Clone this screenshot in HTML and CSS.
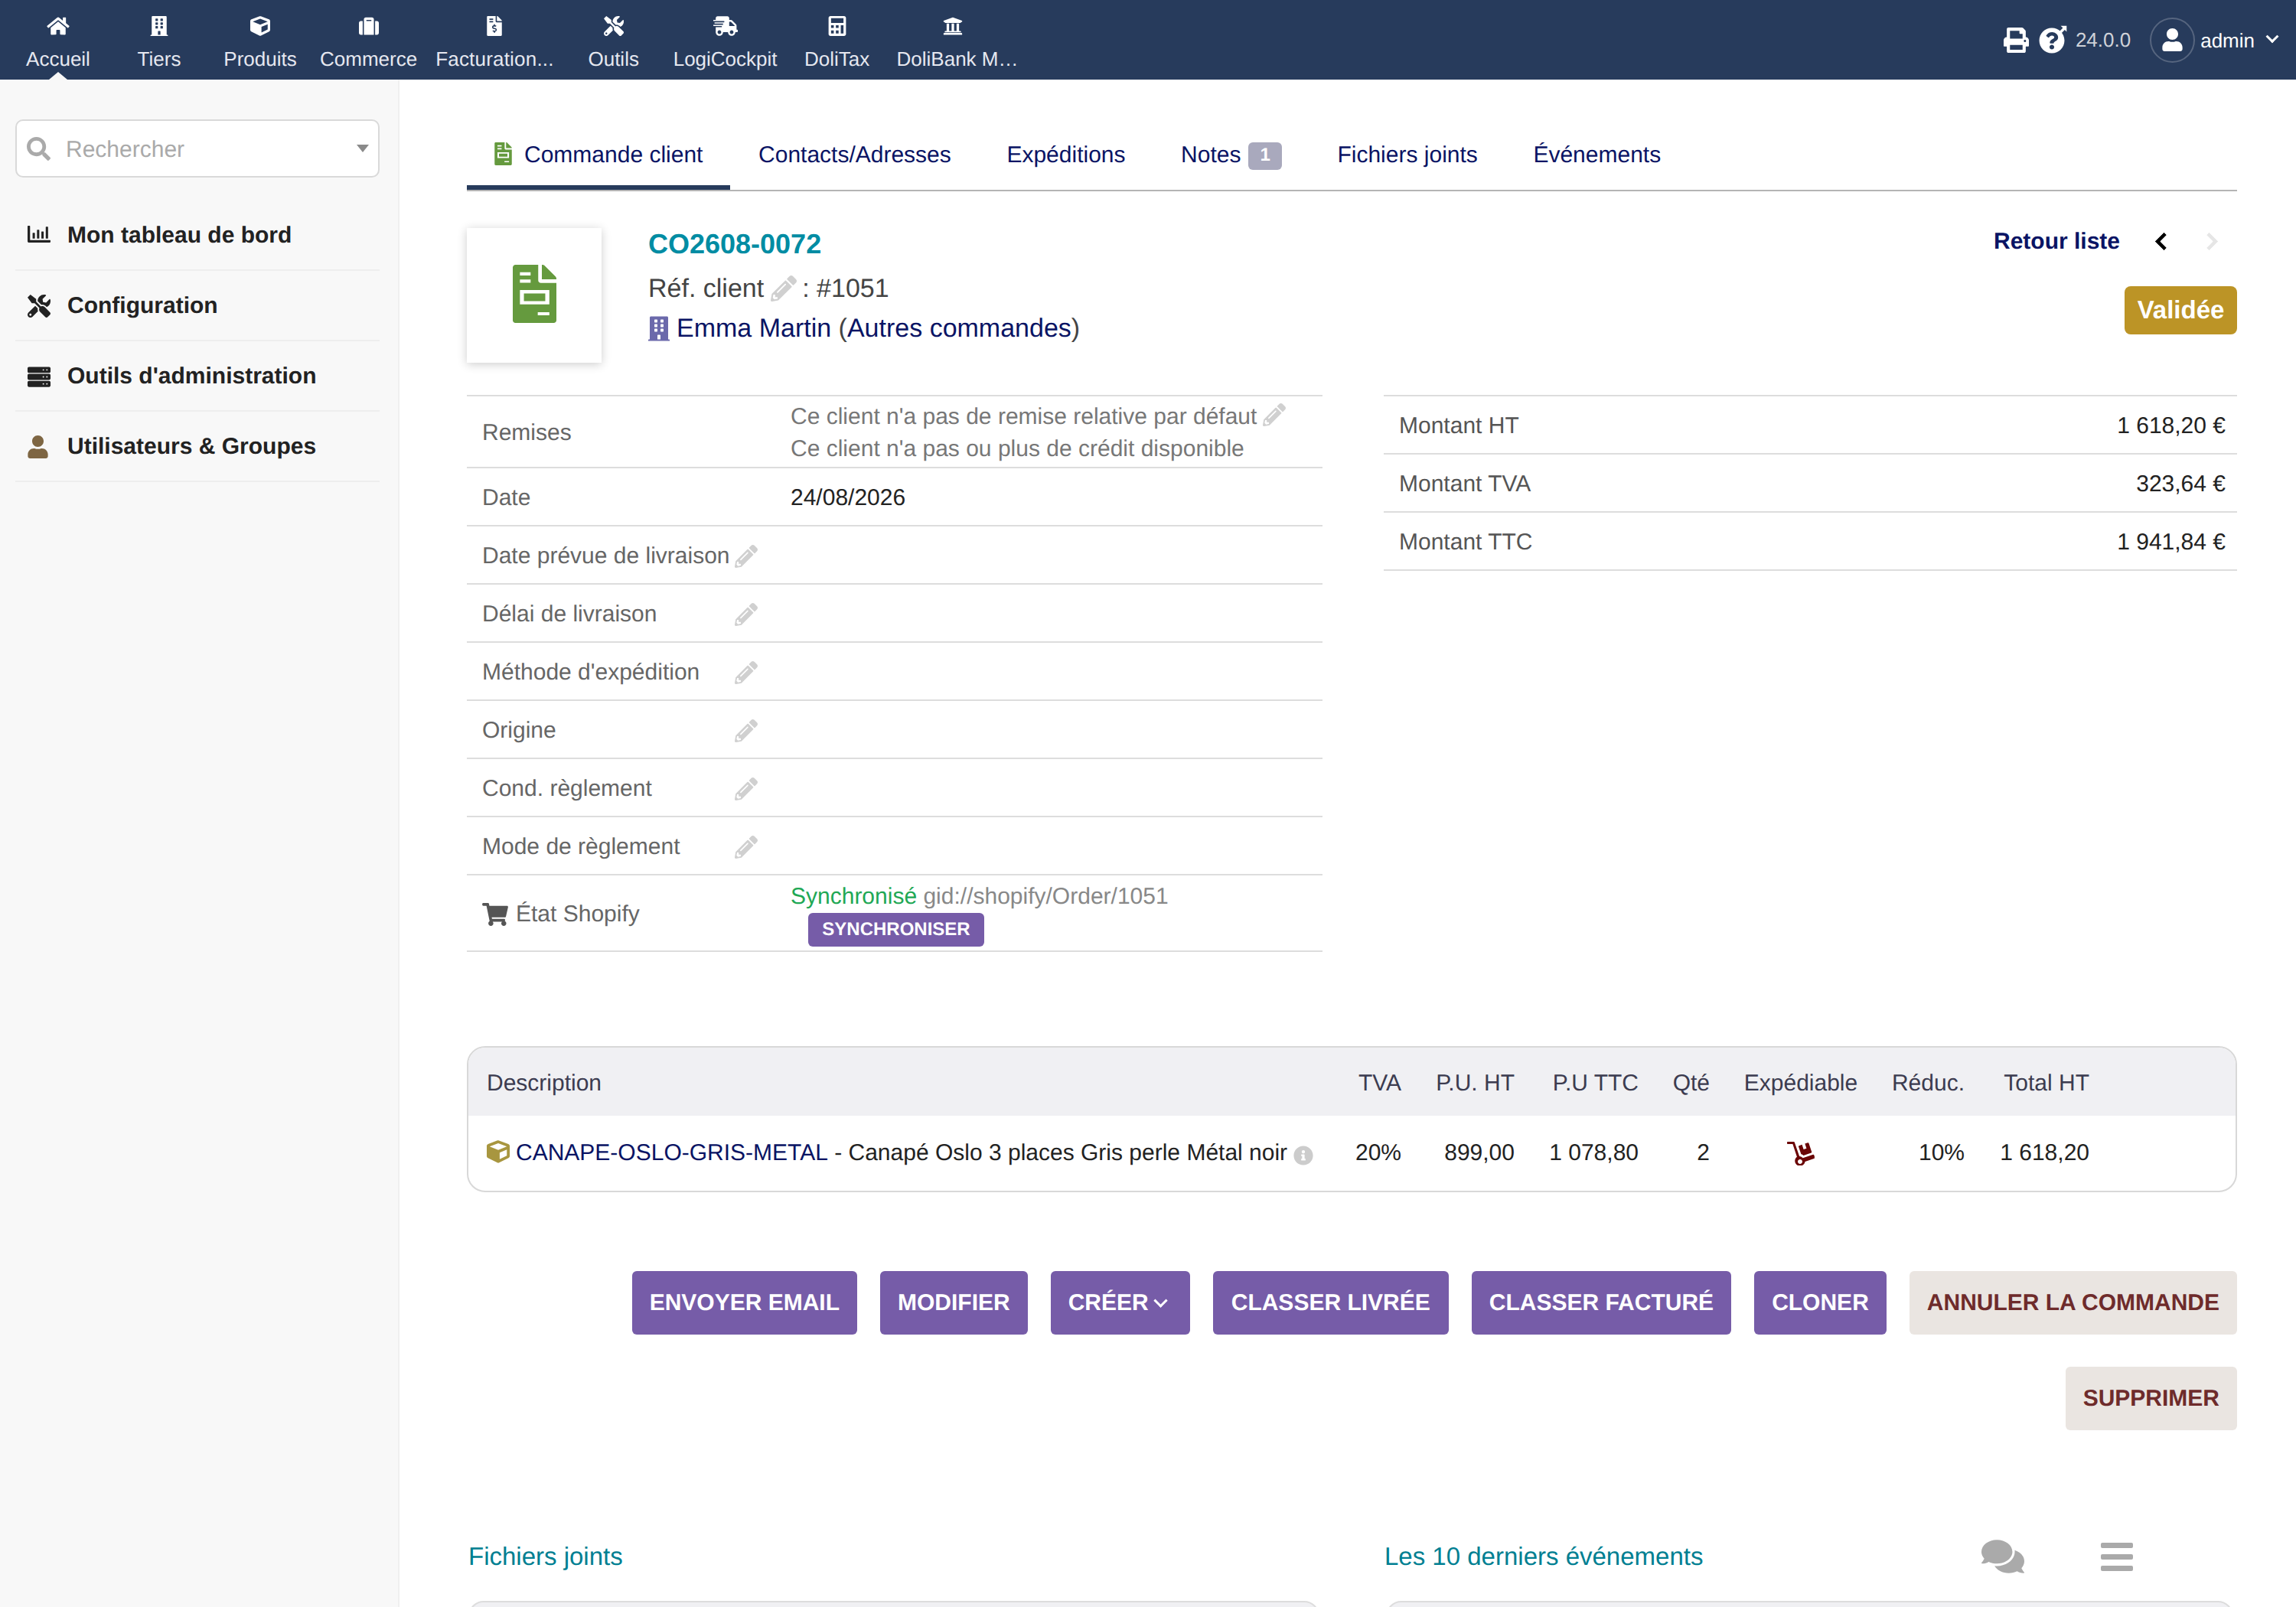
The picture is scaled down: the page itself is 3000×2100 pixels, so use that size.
FILE: index.html
```html
<!DOCTYPE html>
<html lang="fr">
<head>
<meta charset="utf-8">
<title>CO2608-0072</title>
<link rel="stylesheet" href="styles.css">
</head>
<body>
<svg class="defs" width="0" height="0" aria-hidden="true">
<symbol id="i-home" viewBox="0 0 576 512"><path d="M280.37 148.26L96 300.11V464a16 16 0 0 0 16 16l112.06-.29a16 16 0 0 0 15.92-16V368a16 16 0 0 1 16-16h64a16 16 0 0 1 16 16v95.64a16 16 0 0 0 16 16.05L464 480a16 16 0 0 0 16-16V300L295.67 148.26a12.19 12.19 0 0 0-15.3 0zM571.6 251.47L488 182.56V44.05a12 12 0 0 0-12-12h-56a12 12 0 0 0-12 12v72.61L318.47 43a48 48 0 0 0-61 0L4.34 251.47a12 12 0 0 0-1.6 16.9l25.5 31A12 12 0 0 0 45.15 301l235.22-193.74a12.19 12.19 0 0 1 15.3 0L530.9 301a12 12 0 0 0 16.9-1.6l25.5-31a12 12 0 0 0-1.7-16.93z"/></symbol>
<symbol id="i-building" viewBox="0 0 448 512"><path d="M436 480h-20V24c0-13.255-10.745-24-24-24H56C42.745 0 32 10.745 32 24v456H12c-6.627 0-12 5.373-12 12v20h448v-20c0-6.627-5.373-12-12-12zM128 76c0-6.627 5.373-12 12-12h40c6.627 0 12 5.373 12 12v40c0 6.627-5.373 12-12 12h-40c-6.627 0-12-5.373-12-12V76zm0 96c0-6.627 5.373-12 12-12h40c6.627 0 12 5.373 12 12v40c0 6.627-5.373 12-12 12h-40c-6.627 0-12-5.373-12-12v-40zm52 148h-40c-6.627 0-12-5.373-12-12v-40c0-6.627 5.373-12 12-12h40c6.627 0 12 5.373 12 12v40c0 6.627-5.373 12-12 12zm76 160h-64v-84c0-6.627 5.373-12 12-12h40c6.627 0 12 5.373 12 12v84zm64-172c0 6.627-5.373 12-12 12h-40c-6.627 0-12-5.373-12-12v-40c0-6.627 5.373-12 12-12h40c6.627 0 12 5.373 12 12v40zm0-96c0 6.627-5.373 12-12 12h-40c-6.627 0-12-5.373-12-12v-40c0-6.627 5.373-12 12-12h40c6.627 0 12 5.373 12 12v40zm0-96c0 6.627-5.373 12-12 12h-40c-6.627 0-12-5.373-12-12V76c0-6.627 5.373-12 12-12h40c6.627 0 12 5.373 12 12v40z"/></symbol>
<symbol id="i-cube" viewBox="0 0 512 512"><path d="M239.1 6.3l-208 78c-18.7 7-31.1 25-31.1 45v225.1c0 18.2 10.3 34.8 26.5 42.9l208 104c13.5 6.8 29.4 6.8 42.9 0l208-104c16.3-8.1 26.5-24.8 26.5-42.9V129.3c0-20-12.4-37.9-31.1-44.9l-208-78C262 2.2 250 2.2 239.1 6.3zM256 68.4l192 72v1.1l-192 78-192-78v-1.1l192-72zm32 356V275.5l160-65v133.9l-160 80z"/></symbol>
<symbol id="i-suitcase" viewBox="0 0 512 512"><path d="M128 480h256V80c0-26.5-21.5-48-48-48H176c-26.5 0-48 21.5-48 48v400zm64-384h128v32H192V96zm320 80v256c0 26.5-21.5 48-48 48h-48V128h48c26.5 0 48 21.5 48 48zM96 480H48c-26.5 0-48-21.5-48-48V176c0-26.5 21.5-48 48-48h48v352z"/></symbol>
<symbol id="i-invoice" viewBox="0 0 384 512"><path fill-rule="evenodd" d="M377 105L279.1 7c-4.5-4.5-10.6-7-17-7H256v128h128v-6.1c0-6.3-2.5-12.4-7-16.9zM224 136V0H24C10.7 0 0 10.7 0 24v464c0 13.3 10.7 24 24 24h336c13.3 0 24-10.7 24-24V160H248c-13.2 0-24-10.8-24-24zM64 64h96v32H64zM64 128h96v32H64zM208 238v-24h-32v24c-26 3-44 22-44 46 0 23 16 40 38 46l42 12c7 2 12 8 12 15 0 8-7 15-16 15h-28c-7 0-13-2-18-6l-22 22c10 9 24 14 38 15v25h32v-25c26-3 44-23 44-47 0-23-16-40-38-46l-42-12c-7-2-12-8-12-15 0-8 7-14 16-14h28c7 0 13 2 18 6l22-22c-10-9-24-14-38-15z"/></symbol>
<symbol id="i-order" viewBox="0 0 384 512"><path fill-rule="evenodd" d="M377 105L279.1 7c-4.5-4.5-10.6-7-17-7H256v128h128v-6.1c0-6.3-2.5-12.4-7-16.9zM224 136V0H24C10.7 0 0 10.7 0 24v464c0 13.3 10.7 24 24 24h336c13.3 0 24-10.7 24-24V160H248c-13.2 0-24-10.8-24-24zM63 65h94v30H63zM63 129h94v30H63zM63 223h259v126H63zM98 252h188v68H98zM220 417h102v28H220z"/></symbol>
<symbol id="i-tools" viewBox="0 0 512 512"><path d="M501.1 395.7L384 278.6c-23.1-23.1-57.6-27.6-85.4-13.9L192 158.1V96L64 0 0 64l96 128h62.1l106.6 106.6c-13.6 27.8-9.2 62.3 13.9 85.4l117.1 117.1c14.6 14.6 38.2 14.6 52.7 0l52.7-52.7c14.5-14.6 14.5-38.2 0-52.7zM331.7 225c28.3 0 54.9 11 74.9 31l19.4 19.4c15.8-6.9 30.8-16.5 43.8-29.5 37.1-37.1 49.7-89.3 37.9-136.7-2.2-9-13.5-12.1-20.1-5.5l-74.4 74.4-67.9-11.3L334 98.9l74.4-74.4c6.6-6.6 3.4-17.9-5.7-20.2-47.4-11.7-99.6.9-136.6 37.9-28.5 28.5-41.9 66.1-41.2 103.6l82.1 82.1c8.1-1.9 16.5-2.9 24.7-2.9zm-103.9 82l-56.7-56.7L18.7 402.8c-25 25-25 65.5 0 90.5s65.5 25 90.5 0l123.6-123.6c-7.6-19.9-9.9-41.6-5-62.7zM64 472c-13.2 0-24-10.8-24-24 0-13.3 10.7-24 24-24s24 10.7 24 24c0 13.2-10.7 24-24 24z"/></symbol>
<symbol id="i-truck" viewBox="0 0 640 512"><path d="M624 352h-16V243.9c0-12.7-5.1-24.9-14.1-33.9L494 110.1c-9-9-21.2-14.1-33.9-14.1H416V48c0-26.5-21.5-48-48-48H112C85.5 0 64 21.5 64 48v48H8c-4.4 0-8 3.6-8 8v16c0 4.4 3.6 8 8 8h272c4.4 0 8 3.6 8 8v16c0 4.4-3.6 8-8 8H40c-4.4 0-8 3.6-8 8v16c0 4.4 3.6 8 8 8h208c4.4 0 8 3.6 8 8v16c0 4.4-3.6 8-8 8H8c-4.4 0-8 3.6-8 8v16c0 4.4 3.6 8 8 8h208c4.4 0 8 3.6 8 8v16c0 4.4-3.6 8-8 8H64v128c0 53 43 96 96 96s96-43 96-96h128c0 53 43 96 96 96s96-43 96-96h48c8.8 0 16-7.2 16-16v-32c0-8.8-7.2-16-16-16zM160 464c-26.5 0-48-21.5-48-48s21.5-48 48-48 48 21.5 48 48-21.5 48-48 48zm320 0c-26.5 0-48-21.5-48-48s21.5-48 48-48 48 21.5 48 48-21.5 48-48 48zm80-208H416V144h44.1l99.9 99.9V256z"/></symbol>
<symbol id="i-calc" viewBox="0 0 448 512"><path fill-rule="evenodd" d="M48 0h352c26.5 0 48 21.5 48 48v416c0 26.500-21.500 48-48 48H48c-26.500 0-48-21.500-48-48V48C0 21.500 21.500 0 48 0zM64 56v120h320V56zM64 236v70h70v-70zM188 236v70h70v-70zM314 236v210h70V236zM64 368v78h70v-78zM188 368v78h70v-78z"/></symbol>
<symbol id="i-bank" viewBox="0 0 512 512"><path d="M496 128v16a8 8 0 0 1-8 8h-24v12c0 6.627-5.373 12-12 12H60c-6.627 0-12-5.373-12-12v-12H24a8 8 0 0 1-8-8v-16a8 8 0 0 1 4.941-7.392l232-88a7.996 7.996 0 0 1 6.118 0l232 88A8 8 0 0 1 496 128zm-24 304H40c-13.255 0-24 10.745-24 24v16a8 8 0 0 0 8 8h464a8 8 0 0 0 8-8v-16c0-13.255-10.745-24-24-24zM96 192v192H60c-6.627 0-12 5.373-12 12v20h416v-20c0-6.627-5.373-12-12-12h-36V192h-64v192h-64V192h-64v192h-64V192H96z"/></symbol>
<symbol id="i-print" viewBox="0 0 512 512"><path d="M448 192V77.25c0-8.49-3.37-16.62-9.37-22.63L393.37 9.37c-6-6-14.14-9.37-22.63-9.37H96C78.33 0 64 14.33 64 32v160c-35.35 0-64 28.65-64 64v112c0 8.84 7.16 16 16 16h48v96c0 17.67 14.33 32 32 32h320c17.67 0 32-14.33 32-32v-96h48c8.84 0 16-7.16 16-16V256c0-35.35-28.65-64-64-64zm-64 256H128v-96h256v96zm0-224H128V64h192v48c0 8.84 7.16 16 16 16h48v96zm48 72c-13.25 0-24-10.75-24-24 0-13.26 10.75-24 24-24s24 10.74 24 24c0 13.25-10.75 24-24 24z"/></symbol>
<symbol id="i-help" viewBox="0 0 512 512"><path d="M504 256c0 136.997-111.043 248-248 248S8 392.997 8 256C8 119.083 119.043 8 256 8s248 111.083 248 248zM262.655 90c-54.497 0-89.255 22.957-116.549 63.758-3.536 5.286-2.353 12.415 2.715 16.258l34.699 26.31c5.205 3.947 12.621 3.008 16.665-2.122 17.864-22.658 30.113-35.797 57.303-35.797 20.429 0 45.698 13.148 45.698 32.958 0 14.976-12.363 22.667-32.534 33.976C247.128 238.528 216 254.941 216 296v4c0 6.627 5.373 12 12 12h56c6.627 0 12-5.373 12-12v-1.333c0-28.462 83.186-29.647 83.186-106.667 0-58.002-60.165-102-116.531-102zM256 338c-25.365 0-46 20.635-46 46 0 25.364 20.635 46 46 46s46-20.636 46-46c0-25.365-20.635-46-46-46z"/></symbol>
<symbol id="i-user" viewBox="0 0 448 512"><path d="M224 256c70.700 0 128-57.300 128-128S294.700 0 224 0 96 57.300 96 128s57.300 128 128 128zm89.600 32h-16.700c-22.200 10.200-46.900 16-72.900 16s-50.600-5.800-72.900-16h-16.700C60.200 288 0 348.200 0 422.400V464c0 26.500 21.500 48 48 48h352c26.500 0 48-21.500 48-48v-41.600c0-74.200-60.200-134.400-134.400-134.400z"/></symbol>
<symbol id="i-search" viewBox="0 0 512 512"><path d="M505 442.700L405.300 343c-4.500-4.500-10.600-7-17-7H372c27.600-35.300 44-79.700 44-128C416 93.100 322.900 0 208 0S0 93.100 0 208s93.100 208 208 208c48.300 0 92.700-16.400 128-44v16.300c0 6.400 2.500 12.500 7 17l99.700 99.700c9.400 9.400 24.600 9.400 33.900 0l28.300-28.300c9.400-9.400 9.400-24.600.1-34zM208 336c-70.700 0-128-57.200-128-128 0-70.700 57.200-128 128-128 70.700 0 128 57.200 128 128 0 70.700-57.200 128-128 128z"/></symbol>
<symbol id="i-chart" viewBox="0 0 512 376"><path d="M0 16C0 7 7 0 16 0h24c9 0 16 7 16 16v304h440c9 0 16 7 16 16v24c0 9-7 16-16 16H32c-18 0-32-14-32-32zM120 160h36c4 0 8 4 8 8v112c0 4-4 8-8 8h-36c-4 0-8-4-8-8V168c0-4 4-8 8-8zM218 90h36c4 0 8 4 8 8v182c0 4-4 8-8 8h-36c-4 0-8-4-8-8V98c0-4 4-8 8-8zM316 130h36c4 0 8 4 8 8v142c0 4-4 8-8 8h-36c-4 0-8-4-8-8V138c0-4 4-8 8-8zM414 20h36c4 0 8 4 8 8v252c0 4-4 8-8 8h-36c-4 0-8-4-8-8V28c0-4 4-8 8-8z"/></symbol>
<symbol id="i-server" viewBox="0 0 512 448"><path fill-rule="evenodd" d="M32 0h448c18 0 32 14 32 32v72c0 18-14 32-32 32H32c-18 0-32-14-32-32V32C0 14 14 0 32 0zM352 52a16 16 0 1 0 0 32 16 16 0 0 0 0-32zM432 52a16 16 0 1 0 0 32 16 16 0 0 0 0-32zM32 156h448c18 0 32 14 32 32v72c0 18-14 32-32 32H32c-18 0-32-14-32-32v-72c0-18 14-32 32-32zM352 208a16 16 0 1 0 0 32 16 16 0 0 0 0-32zM432 208a16 16 0 1 0 0 32 16 16 0 0 0 0-32zM32 312h448c18 0 32 14 32 32v72c0 18-14 32-32 32H32c-18 0-32-14-32-32v-72c0-18 14-32 32-32zM352 364a16 16 0 1 0 0 32 16 16 0 0 0 0-32zM432 364a16 16 0 1 0 0 32 16 16 0 0 0 0-32z"/></symbol>
<symbol id="i-pencil" viewBox="0 0 512 512"><path d="M497.900 142.100l-46.100 46.100c-4.700 4.700-12.300 4.700-17 0l-111-111c-4.700-4.700-4.700-12.300 0-17l46.100-46.100c18.700-18.700 49.100-18.700 67.900 0l60.100 60.100c18.800 18.700 18.800 49.100 0 67.900zM284.200 99.800L21.600 362.400.4 483.900c-2.900 16.400 11.400 30.600 27.800 27.800l121.500-21.300 262.600-262.600c4.700-4.700 4.700-12.300 0-17l-111-111c-4.800-4.700-12.400-4.700-17.100 0zM124.100 339.900c-5.500-5.500-5.500-14.300 0-19.800l154-154c5.500-5.500 14.300-5.500 19.800 0s5.500 14.300 0 19.800l-154 154c-5.500 5.500-14.300 5.500-19.800 0zM88 424h48v36.300l-64.500 11.300-31.100-31.100L51.700 376H88v48z"/></symbol>
<symbol id="i-cart" viewBox="0 0 576 512"><path d="M528.120 301.319l47.273-208C578.806 78.301 567.391 64 551.990 64H159.208l-9.166-44.810C147.758 8.021 137.930 0 126.529 0H24C10.745 0 0 10.745 0 24v16c0 13.255 10.745 24 24 24h69.883l70.248 343.435C147.325 417.100 136 435.222 136 456c0 30.928 25.072 56 56 56s56-25.072 56-56c0-15.674-6.447-29.835-16.824-40h209.647C430.447 426.165 424 440.326 424 456c0 30.928 25.072 56 56 56s56-25.072 56-56c0-22.172-12.888-41.332-31.579-50.405l5.517-24.276c3.413-15.018-8.002-29.319-23.403-29.319H218.117l-6.545-32h293.145c11.206 0 20.920-7.754 23.403-18.681z"/></symbol>
<symbol id="i-dolly" viewBox="0 0 576 512"><path d="M294.200 277.700c18 5 34.700 13.400 49.500 24.700l161.500-53.800c8.400-2.800 12.900-11.900 10.100-20.200L454.900 47.200c-2.800-8.400-11.900-12.900-20.200-10.100l-61.100 20.400 33.100 99.400L346 177l-33.100-99.400-61.600 20.500c-8.400 2.800-12.900 11.900-10.100 20.200l53 159.400zm281 48.700L565 296c-2.800-8.400-11.900-12.900-20.200-10.100l-213.500 71.200c-17.200-22-43.600-36.400-73.500-37L158.400 32.800C155 22.900 145.400 16 134.900 16H16C7.200 16 0 23.200 0 32v16c0 8.800 7.200 16 16 16h102.200l88.700 266.100c-26.200 19.500-42.900 51-42.900 85.900 0 59 48 107 107 107 53.500 0 97.800-39.400 105.700-90.700l187.100-62.400c8.300-2.800 12.900-11.900 10.100-20.200zM272 480c-26.500 0-48-21.500-48-48s21.500-48 48-48 48 21.500 48 48-21.500 48-48 48z"/></symbol>
<symbol id="i-comments" viewBox="0 0 576 512"><path d="M416 192c0-88.400-93.100-160-208-160S0 103.600 0 192c0 34.300 14.100 65.900 38 92-13.400 30.200-35.500 54.200-35.800 54.500-2.200 2.300-2.800 5.700-1.500 8.700S4.800 352 8 352c36.600 0 66.900-12.300 88.700-25 32.200 15.700 70.300 25 111.300 25 114.900 0 208-71.600 208-160zm122 220c23.900-26 38-57.700 38-92 0-66.900-53.500-124.200-129.300-148.100.9 6.600 1.300 13.300 1.300 20.100 0 105.900-107.700 192-240 192-10.800 0-21.300-.8-31.700-1.900C207.800 439.600 281.800 480 368 480c41 0 79.100-9.200 111.300-25 21.800 12.700 52.100 25 88.700 25 3.200 0 6.100-1.900 7.300-4.800 1.300-2.900.7-6.300-1.500-8.700-.3-.3-22.400-24.200-35.800-54.500z"/></symbol>
<symbol id="i-bars" viewBox="0 0 42 37"><rect width="42" height="7" rx="2"/><rect y="15" width="42" height="7" rx="2"/><rect y="30" width="42" height="7" rx="2"/></symbol>
<symbol id="i-info" viewBox="0 0 512 512"><path d="M256 8C119.043 8 8 119.083 8 256c0 136.997 111.043 248 248 248s248-111.003 248-248C504 119.083 392.957 8 256 8zm0 110c23.196 0 42 18.804 42 42s-18.804 42-42 42-42-18.804-42-42 18.804-42 42-42zm56 254c0 6.627-5.373 12-12 12h-88c-6.627 0-12-5.373-12-12v-24c0-6.627 5.373-12 12-12h12v-64h-12c-6.627 0-12-5.373-12-12v-24c0-6.627 5.373-12 12-12h64c6.627 0 12 5.373 12 12v100h12c6.627 0 12 5.373 12 12v24z"/></symbol>
<symbol id="i-arrow" viewBox="0 0 20 20"><path d="M8 1h11v11l-3.500-3.500-6 6-3.500-3.500 6-6z"/></symbol>
</svg>

<header class="topbar">
  <nav class="topnav">
    <a class="navitem active"><svg class="navicon"><use href="#i-home"/></svg><span>Accueil</span></a>
    <a class="navitem"><svg class="navicon"><use href="#i-building"/></svg><span>Tiers</span></a>
    <a class="navitem"><svg class="navicon"><use href="#i-cube"/></svg><span>Produits</span></a>
    <a class="navitem"><svg class="navicon"><use href="#i-suitcase"/></svg><span>Commerce</span></a>
    <a class="navitem nv-long"><svg class="navicon"><use href="#i-invoice"/></svg><span>Facturation...</span></a>
    <a class="navitem"><svg class="navicon"><use href="#i-tools"/></svg><span>Outils</span></a>
    <a class="navitem"><svg class="navicon"><use href="#i-truck"/></svg><span>LogiCockpit</span></a>
    <a class="navitem"><svg class="navicon"><use href="#i-calc"/></svg><span>DoliTax</span></a>
    <a class="navitem"><svg class="navicon nv-bank"><use href="#i-bank"/></svg><span>DoliBank M…</span></a>
  </nav>
  <div class="topright">
    <svg class="ti-print"><use href="#i-print"/></svg>
    <span class="help"><svg class="ti-help"><use href="#i-help"/></svg><svg class="ti-arrow"><use href="#i-arrow"/></svg></span>
    <span class="version">24.0.0</span>
    <span class="avatar"><svg class="ti-user"><use href="#i-user"/></svg></span>
    <span class="uname">admin</span>
    <span class="chev-down"></span>
  </div>
</header>

<div class="layout">
  <aside class="sidebar">
    <div class="search">
      <svg class="search-icon"><use href="#i-search"/></svg>
      <span class="search-text">Rechercher</span>
      <span class="caret"></span>
    </div>
    <ul class="menu">
      <li class="menu-item"><svg class="mi mi-chart"><use href="#i-chart"/></svg>Mon tableau de bord</li>
      <li class="menu-item"><svg class="mi mi-tools"><use href="#i-tools"/></svg>Configuration</li>
      <li class="menu-item"><svg class="mi mi-server"><use href="#i-server"/></svg>Outils d'administration</li>
      <li class="menu-item"><svg class="mi mi-user"><use href="#i-user"/></svg>Utilisateurs &amp; Groupes</li>
    </ul>
  </aside>

  <main class="main">
    <div class="tabs">
      <a class="tab active"><svg class="tab-icon"><use href="#i-order"/></svg>Commande client</a>
      <a class="tab">Contacts/Adresses</a>
      <a class="tab">Expéditions</a>
      <a class="tab">Notes<span class="badge">1</span></a>
      <a class="tab">Fichiers joints</a>
      <a class="tab">Événements</a>
    </div>

    <section class="banner">
      <div class="photo"><svg class="photo-icon"><use href="#i-order"/></svg></div>
      <div class="refs">
        <div class="ref-main">CO2608-0072</div>
        <div class="ref-line">Réf. client<svg class="pencil p-ref"><use href="#i-pencil"/></svg>: #1051</div>
        <div class="ref-line ref-third"><svg class="third-icon"><use href="#i-building"/></svg><a class="lnk">Emma Martin</a> (<a class="lnk">Autres commandes</a>)</div>
      </div>
      <div class="banner-right">
        <div class="backrow">
          <a class="backlink">Retour liste</a>
          <span class="chev chev-left"></span>
          <span class="chev chev-right"></span>
        </div>
        <span class="status">Validée</span>
      </div>
    </section>

    <section class="fields">
      <div class="ftable">
        <div class="frow frow-tall"><span class="flabel">Remises</span><span class="fvalue muted">Ce client n'a pas de remise relative par défaut<svg class="pencil p-inline"><use href="#i-pencil"/></svg><br>Ce client n'a pas ou plus de crédit disponible</span></div>
        <div class="frow"><span class="flabel">Date</span><span class="fvalue">24/08/2026</span></div>
        <div class="frow"><span class="flabel with-edit">Date prévue de livraison<svg class="pencil p-edit"><use href="#i-pencil"/></svg></span></div>
        <div class="frow"><span class="flabel with-edit">Délai de livraison<svg class="pencil p-edit"><use href="#i-pencil"/></svg></span></div>
        <div class="frow"><span class="flabel with-edit">Méthode d'expédition<svg class="pencil p-edit"><use href="#i-pencil"/></svg></span></div>
        <div class="frow"><span class="flabel with-edit">Origine<svg class="pencil p-edit"><use href="#i-pencil"/></svg></span></div>
        <div class="frow"><span class="flabel with-edit">Cond. règlement<svg class="pencil p-edit"><use href="#i-pencil"/></svg></span></div>
        <div class="frow"><span class="flabel with-edit">Mode de règlement<svg class="pencil p-edit"><use href="#i-pencil"/></svg></span></div>
        <div class="frow frow-shop"><span class="flabel"><svg class="cart"><use href="#i-cart"/></svg>État Shopify</span><span class="fvalue shop"><span class="shop-line"><span class="ok">Synchronisé</span> <span class="gid">gid://shopify/Order/1051</span></span><a class="btn-small">SYNCHRONISER</a></span></div>
      </div>
      <div class="ftable totals">
        <div class="trow"><span class="flabel">Montant HT</span><span class="amount">1 618,20 €</span></div>
        <div class="trow"><span class="flabel">Montant TVA</span><span class="amount">323,64 €</span></div>
        <div class="trow"><span class="flabel">Montant TTC</span><span class="amount">1 941,84 €</span></div>
      </div>
    </section>

    <section class="lines">
      <div class="lrow lhead">
        <span class="c-desc">Description</span><span class="c-r">TVA</span><span class="c-r">P.U. HT</span><span class="c-r">P.U TTC</span><span class="c-r">Qté</span><span class="c-c">Expédiable</span><span class="c-r">Réduc.</span><span class="c-r">Total HT</span>
      </div>
      <div class="lrow lbody">
        <span class="c-desc"><svg class="prod-icon"><use href="#i-cube"/></svg><a class="lnk">CANAPE-OSLO-GRIS-METAL</a> - Canapé Oslo 3 places Gris perle Métal noir<svg class="info"><use href="#i-info"/></svg></span><span class="c-r">20%</span><span class="c-r">899,00</span><span class="c-r">1 078,80</span><span class="c-r">2</span><span class="c-c"><svg class="dolly"><use href="#i-dolly"/></svg></span><span class="c-r">10%</span><span class="c-r">1 618,20</span>
      </div>
    </section>

    <section class="actions">
      <a class="btn">ENVOYER EMAIL</a>
      <a class="btn">MODIFIER</a>
      <a class="btn">CRÉER<span class="btn-chev"></span></a>
      <a class="btn btn-wide">CLASSER LIVRÉE</a>
      <a class="btn">CLASSER FACTURÉ</a>
      <a class="btn">CLONER</a>
      <a class="btn danger">ANNULER LA COMMANDE</a>
      <a class="btn danger">SUPPRIMER</a>
    </section>

    <section class="bottom">
      <div class="bcol">
        <h3 class="btitle">Fichiers joints</h3>
        <div class="bbox"></div>
      </div>
      <div class="bcol">
        <div class="bhead">
          <h3 class="btitle">Les 10 derniers événements</h3>
          <svg class="bi-comments"><use href="#i-comments"/></svg>
          <svg class="bi-bars"><use href="#i-bars"/></svg>
        </div>
        <div class="bbox"></div>
      </div>
    </section>
  </main>
</div>
</body>
</html>
```
FILE: styles.css
```css
* { box-sizing: border-box; }
html, body { margin: 0; padding: 0; height: 2100px; overflow: hidden; background: #fff; }
body { font-family: "Liberation Sans", Arial, sans-serif; font-size: 30px; color: #222; text-rendering: geometricPrecision; }
.defs { position: absolute; }
svg { fill: currentColor; display: block; flex: none; }
a { color: inherit; text-decoration: none; }
ul { list-style: none; margin: 0; padding: 0; }

/* top bar */
.topbar { height: 104px; background: #273b5c; display: flex; justify-content: space-between; color: #fff; }
.topnav { display: flex; padding-left: 10px; }
.navitem { position: relative; min-width: 132px; padding: 0 12px; display: flex; flex-direction: column; align-items: center; color: #e6e8f0; font-size: 26px; line-height: 30px; white-space: nowrap; }
.navitem span { margin-top: 15px; }
.nv-long span { letter-spacing: .2px; }
.navicon { width: 32px; height: 26px; margin-top: 21px; color: #fff; }
.nv-bank { margin-right: 12px; }
.navitem.active::after { content: ""; position: absolute; left: 50%; bottom: 0; margin-left: -12px; border: 12px solid transparent; border-top: 0; border-bottom: 10px solid #f8f8f8; }
.topright { display: flex; align-items: center; padding-right: 25px; }
.ti-print { width: 33px; height: 33px; margin-right: 14px; }
.help { position: relative; width: 35px; height: 34px; margin-right: 12px; }
.ti-help { width: 34px; height: 34px; position: absolute; left: -1px; bottom: -1px; }
.ti-arrow { width: 14px; height: 14px; position: absolute; right: -1px; top: -2px; }
.version { color: #cfd2d8; font-size: 26px; margin-right: 25px; }
.avatar { width: 59px; height: 59px; border: 2px solid #56657f; border-radius: 50%; display: flex; align-items: center; justify-content: center; margin-right: 7px; }
.ti-user { width: 27px; height: 30px; }
.uname { font-size: 26px; margin-right: 17px; padding-top: 2px; }
.chev-down { width: 12px; height: 12px; border: solid #fff; border-width: 0 3px 3px 0; transform: rotate(45deg) translate(-3px, -3px); }

/* layout */
.layout { display: flex; height: 1996px; }
.sidebar { width: 522px; background: #f8f8f8; border-right: 2px solid #f0f0f0; padding: 52px 24px 0 20px; flex: none; }
.search { height: 76px; width: 476px; background: #fff; border: 2px solid #d9d9d9; border-radius: 10px; display: flex; align-items: center; padding: 0 12px 0 13px; }
.search-icon { width: 31px; height: 31px; color: #aaa; }
.search-text { color: #aaa; margin: 3px 0 0 20px; flex: 1; }
.caret { border: 8px solid transparent; border-top: 10px solid #8a8a8a; border-bottom: 0; }
.menu { margin-top: 30px; width: 476px; }
.menu-item { height: 92px; display: flex; align-items: center; border-bottom: 2px solid #eee; font-weight: 700; padding: 2px 0 0 16px; }
.mi { width: 30px; height: 30px; margin-right: 22px; color: #222; }
.mi-chart { height: 22px; margin-top: -4px; }
.mi-server { height: 27px; }
.mi-user { color: #7e6643; width: 27px; margin-right: 25px; }

.main { flex: 1; padding: 80px 77px 0 88px; min-width: 0; }

/* tabs */
.tabs { display: flex; gap: .6px; border-bottom: 2px solid #b4b4b4; height: 66px; }
.tab { padding: 2px 36px 0; color: #0a1464; line-height: 34px; display: flex; align-items: flex-start; height: 64px; white-space: nowrap; }
.tab.active { border-bottom: 6px solid #273b5c; }
.tab-icon { width: 23px; height: 30px; color: #659a3e; margin-right: 16px; }
.badge { background: #a9a9bd; color: #fff; font-size: 24px; font-weight: 700; line-height: 34px; height: 36px; padding: 0 15px; border-radius: 6px; margin-left: 10px; }

/* banner */
.banner { display: flex; margin-top: 48px; height: 176px; }
.photo { width: 176px; height: 176px; background: #fff; box-shadow: 0 2px 12px rgba(0,0,0,.2); display: flex; align-items: center; justify-content: center; }
.photo-icon { width: 57px; height: 76px; color: #659a3e; margin-top: -4px; }
.refs { margin-left: 61px; flex: 1; color: #444; font-size: 34px; padding-top: 1px; }
.ref-main { font-size: 36px; font-weight: 700; color: #008ca3; line-height: 40px; }
.ref-line { display: flex; align-items: center; line-height: 40px; margin-top: 18px; }
.ref-third { margin-top: 12px; white-space: pre; }
.lnk { color: #0a1464; }
.pencil { color: #d0d0d0; }
.p-ref { width: 34px; height: 34px; margin: 0 7px 0 9px; }
.third-icon { width: 28px; height: 35px; color: #6b69ab; margin-right: 9px; }
.banner-right { display: flex; flex-direction: column; align-items: flex-end; }
.backrow { display: flex; align-items: center; height: 34px; margin-bottom: 42px; }
.backlink { font-weight: 700; color: #0a1464; margin-right: 49px; padding-top: 2px; }
.chev { width: 17px; height: 17px; border-style: solid; border-width: 0 0 5px 5px; transform: rotate(45deg); border-radius: 1px; }
.chev-left { border-color: #000; }
.chev-right { border-color: #e6e6e6; transform: rotate(225deg); margin-left: 42px; margin-right: 28px; }
.status { background: #bc9426; color: #fff; font-size: 33px; font-weight: 700; width: 147px; height: 63px; padding-bottom: 2px; border-radius: 8px; display: flex; align-items: center; justify-content: center; }

/* fields */
.fields { display: grid; grid-template-columns: 1118px 1115px; column-gap: 80px; margin-top: 42px; align-items: start; }
.ftable { border-top: 2px solid #ddd; }
.frow, .trow { display: flex; align-items: center; border-bottom: 2px solid #ddd; height: 76px; padding: 4px 0 0 20px; }
.frow-tall { height: 94px; }
.frow-shop { height: 100px; }
.flabel { color: #666; width: 403px; flex: none; display: flex; align-items: center; white-space: nowrap; }
.with-edit { justify-content: space-between; padding-right: 43px; }
.fvalue { color: #222; line-height: 42px; }
.muted { color: #777; }
.p-inline { display: inline-block; width: 30px; height: 30px; margin-left: 8px; vertical-align: -3px; }
.p-edit { width: 30px; height: 30px; }
.cart { width: 34px; height: 30px; margin-right: 10px; color: #555; }
.shop { display: flex; flex-direction: column; align-items: flex-start; margin-top: 2px; }
.shop-line { line-height: 34px; white-space: pre; }
.ok { color: #1fa855; }
.gid { color: #888; }
.btn-small { background: #765ca8; color: #fff; font-size: 24px; font-weight: 700; height: 44px; line-height: 44px; width: 230px; text-align: center; border-radius: 6px; margin: 4px 0 0 23px; }
.trow { justify-content: space-between; padding-right: 15px; }
.trow .flabel { width: auto; }
.totals .flabel { color: #555; }

/* product lines */
.lines { margin-top: 123px; border: 2px solid #d8d8d8; border-radius: 24px; overflow: hidden; }
.lrow { display: grid; grid-template-columns: 1100px 95px 148px 162px 93px 194px 139px 163px; align-items: center; padding-left: 24px; }
.lhead { height: 89px; background: #f0f0f3; color: #3c3c50; padding-top: 5px; }
.lbody { height: 98px; }
.c-desc { display: flex; align-items: center; white-space: pre; }
.c-r { text-align: right; white-space: nowrap; }
.c-c { display: flex; justify-content: center; padding-left: 44px; }
.prod-icon { width: 30px; height: 30px; color: #a8963f; margin: -4px 8px 0 0; }
.info { width: 26px; height: 26px; color: #ccc; margin: 6px 0 0 8px; }
.dolly { width: 36px; height: 32px; color: #6b0505; }

/* action buttons */
.actions { display: flex; flex-wrap: wrap; justify-content: flex-end; gap: 42px 30px; margin-top: 103px; }
.btn { height: 83px; padding: 0 23px; background: #765ca8; color: #fff; font-size: 30px; font-weight: 700; border-radius: 6px; display: flex; align-items: center; white-space: nowrap; }
.btn-wide { padding: 0 24px; }
.btn.danger { background: #eae5e1; color: #6e2b2b; }
.btn-chev { width: 13px; height: 13px; border: solid #fff; border-width: 0 3px 3px 0; transform: rotate(45deg) translate(-2px,-2px); margin: 0 9px 0 9px; }

/* bottom */
.bottom { display: grid; grid-template-columns: 1118px 1115px; column-gap: 80px; margin-top: 145px; }
.btitle { margin: 0; font-size: 33px; font-weight: 400; color: #007f92; line-height: 40px; padding-left: 2px; }
.bhead { display: flex; align-items: center; height: 40px; }
.bhead .btitle { flex: 1; padding-left: 1px; }
.bi-comments { width: 56px; height: 50px; color: #aaa; margin-right: 100px; }
.bi-bars { width: 42px; height: 37px; color: #aaa; margin-right: 136px; }
.bbox { margin: 38px 0 0 2px; height: 40px; background: #f0f0f3; border: 2px solid #ddd; border-radius: 24px; width: 1112px; }
.bhead + .bbox { margin-left: 3px; width: 1107px; }
```
